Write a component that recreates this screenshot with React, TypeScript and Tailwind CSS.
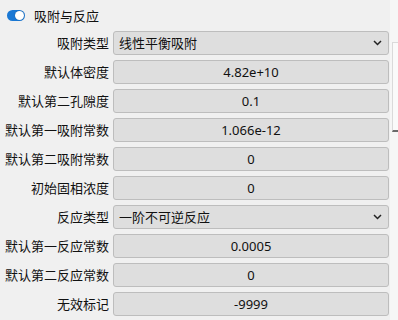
const rows: { label: string; value: string; select?: boolean }[] = [
  { label: "吸附类型", value: "线性平衡吸附", select: true },
  { label: "默认体密度", value: "4.82e+10" },
  { label: "默认第二孔隙度", value: "0.1" },
  { label: "默认第一吸附常数", value: "1.066e-12" },
  { label: "默认第二吸附常数", value: "0" },
  { label: "初始固相浓度", value: "0" },
  { label: "反应类型", value: "一阶不可逆反应", select: true },
  { label: "默认第一反应常数", value: "0.0005" },
  { label: "默认第二反应常数", value: "0" },
  { label: "无效标记", value: "-9999" },
]

function Chevron() {
  return (
    <svg width="9" height="6" viewBox="0 0 9 6" className="text-[#222]">
      <path d="M1 1 L4.5 4.5 L8 1" fill="none" stroke="currentColor" strokeWidth="1.5" />
    </svg>
  )
}

export default function App() {
  return (
    <div
      className="flex w-[398px] h-[320px] bg-[#f0f0f0] text-[13px] text-[#111] overflow-hidden"
      style={{ fontFamily: '"Noto Sans", "Noto Sans CJK SC", sans-serif' }}
    >
      <div className="w-[390px] flex flex-col">
        <div className="h-[31px] flex items-center pl-[7px] gap-[9px]">
          <div className="w-[18px] h-[11px] rounded-full bg-[#1a78d4] flex items-center justify-end pr-[1px]">
            <div className="w-[9px] h-[9px] rounded-full bg-white shadow-[0_0_1px_rgba(0,0,0,0.4)]" />
          </div>
          <span className="leading-none pt-[1px]">吸附与反应</span>
        </div>
        <div className="flex flex-col gap-[5px]">
          {rows.map((r) => (
            <div key={r.label} className="flex items-center h-[24px]">
              <div className="w-[109px] text-right leading-none">{r.label}</div>
              <div
                className={
                  "ml-[4px] w-[276px] h-[24px] bg-[#dedede] border border-[#bdbdbd] rounded-[3px] flex items-center leading-none " +
                  (r.select ? "justify-between pl-[5px] pr-[6px]" : "justify-center")
                }
              >
                <span>{r.value}</span>
                {r.select && <Chevron />}
              </div>
            </div>
          ))}
        </div>
      </div>
      <div className="w-[8px] h-full bg-[#f6f6f6] pt-[42px]">
        <div className="ml-[2px] h-[90px] bg-[#fafafa] border-l border-t border-[#dadada] border-b-2 border-b-[#6a6a6a]" />
      </div>
    </div>
  )
}
